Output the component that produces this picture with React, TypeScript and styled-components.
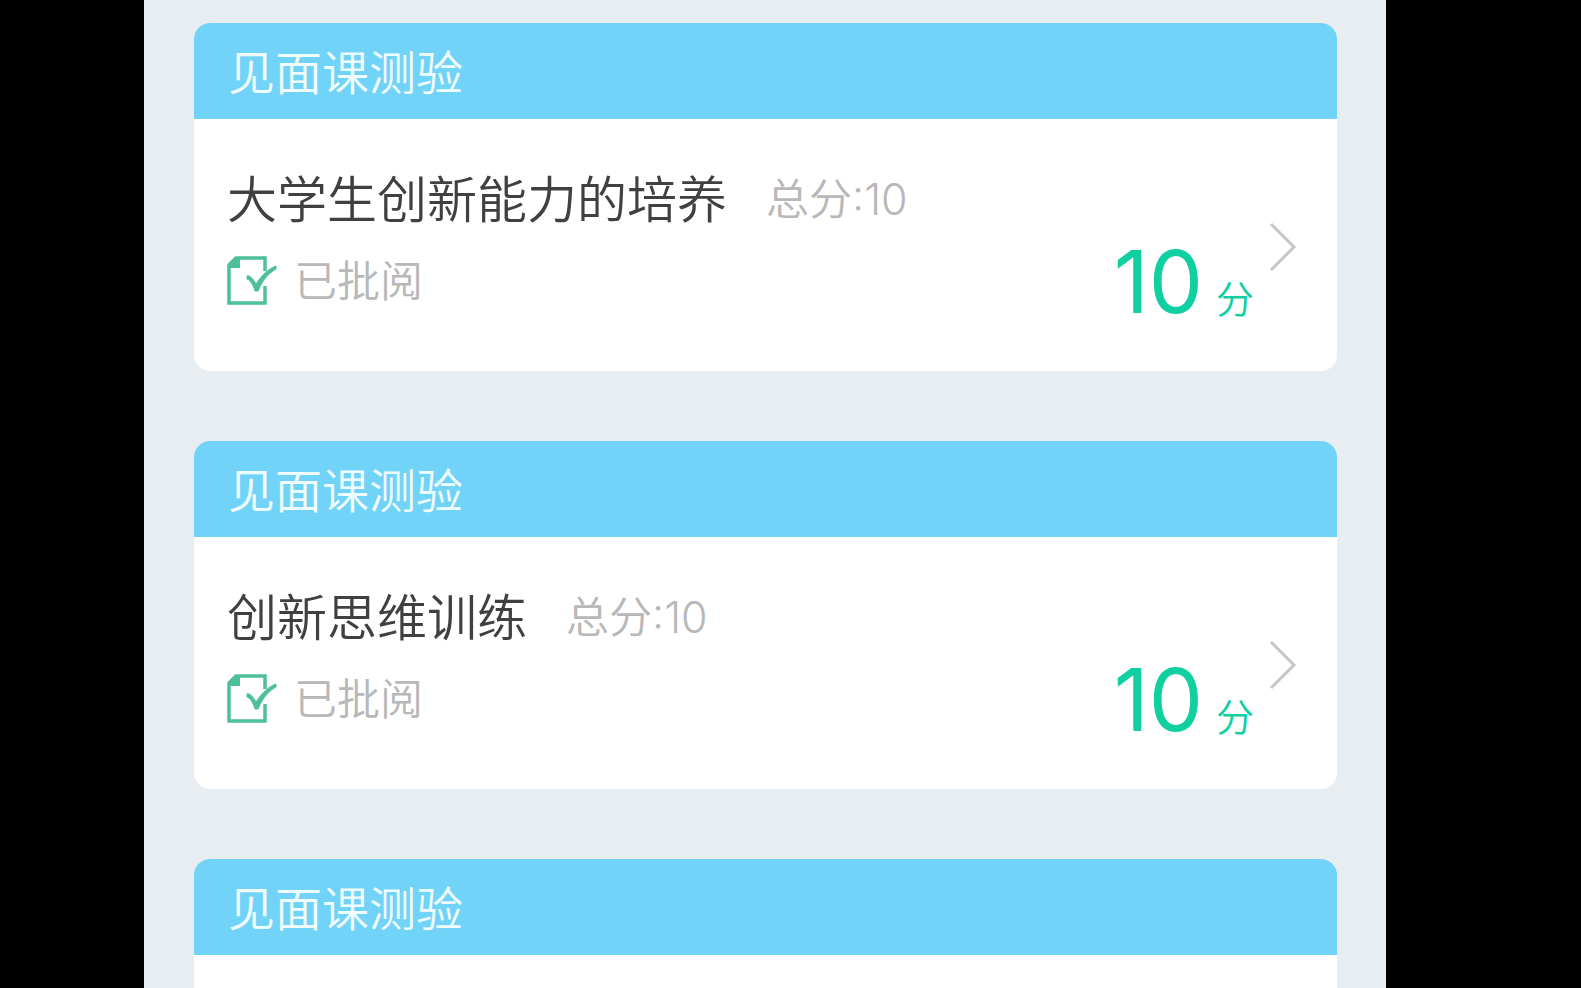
import React from "react";
import styled, { createGlobalStyle } from "styled-components";

const GlobalStyle = createGlobalStyle`
  *, *::before, *::after { box-sizing: border-box; }
  body {
    margin: 0;
    background: #000;
    font-family: Inter, "Noto Sans CJK SC", sans-serif;
  }
`;

const Stage = styled.div`
  height: 100vh;
  padding: 0 195px 0 144px;
  overflow: hidden;
  background: #000;
`;

const Screen = styled.main`
  display: flex;
  flex-direction: column;
  gap: 70px;
  min-height: 100%;
  padding: 23px 49px 70px 50px;
  background: #e8edf2;
`;

const Card = styled.article`
  flex: none;
  overflow: hidden;
  border-radius: 16px;
  background: #fff;
`;

const CardHeader = styled.h2`
  margin: 0;
  padding: 4px 34px 0;
  background: #72d3f8;
  color: #f0fdff;
  font-size: 47px;
  font-weight: 350;
  line-height: 92px;
`;

const CardBody = styled.a`
  display: flex;
  align-items: flex-start;
  min-height: 252px;
  padding: 48px 40px 16px 33px;
  color: inherit;
  text-decoration: none;
`;

const Info = styled.div`
  display: flex;
  flex: 1;
  flex-direction: column;
  gap: 18px;
`;

const Row = styled.div<{ $gap: number }>`
  display: flex;
  align-items: center;
  gap: ${(p) => p.$gap}px;
  height: 64px;
  white-space: nowrap;
`;

const Title = styled.h3`
  margin: 0;
  padding-top: 2px;
  color: #404040;
  font-size: 50px;
  font-weight: 350;
  line-height: 64px;
`;

const Muted = styled.span`
  color: #b8b8b8;
  font-size: 43px;
  font-weight: 350;
  line-height: 64px;
`;

const Score = styled.div`
  display: flex;
  align-items: baseline;
  gap: 13px;
  margin-top: 65px;
  color: #10cfa0;
  line-height: 100px;
`;

const ScoreValue = styled.strong`
  font-size: 86px;
  font-weight: 400;
`;

const ScoreUnit = styled.span`
  font-size: 38px;
  font-weight: 350;
`;

const Chevron = styled.svg`
  width: 28px;
  height: 50px;
  margin: 55px 0 0 15px;
`;

const ReviewedMark = styled.svg`
  width: 50px;
  height: 50px;
`;

function ReviewedIcon() {
  return (
    <ReviewedMark viewBox="0 0 50 50" fill="none" aria-hidden="true">
      <path
        d="M38 15V2H9L2 9V47H38V30"
        stroke="#4dbf9b"
        strokeWidth="3.5"
      />
      <path d="M1 12L11 1H13V12Z" fill="#4dbf9b" />
      <path
        d="M20 20C23 19 26 23 29 28C35 19 41 13 49 10L49 13C42 17 36 23 31 35L28 35C26 28 23 24 20 23Z"
        fill="#4dbf9b"
        stroke="#4dbf9b"
      />
    </ReviewedMark>
  );
}

interface Quiz {
  id: number;
  title?: string;
  total?: number;
  score?: number;
}

const quizzes: Quiz[] = [
  { id: 1, title: "大学生创新能力的培养", total: 10, score: 10 },
  { id: 2, title: "创新思维训练", total: 10, score: 10 },
  { id: 3 },
];

function QuizCard({ id, title, total, score }: Quiz) {
  return (
    <Card>
      <CardHeader>见面课测验</CardHeader>
      <CardBody href={`#quiz-${id}`}>
        {title && (
          <>
            <Info>
              <Row $gap={39}>
                <Title>{title}</Title>
                <Muted>总分:{total}</Muted>
              </Row>
              <Row $gap={17}>
                <ReviewedIcon />
                <Muted>已批阅</Muted>
              </Row>
            </Info>
            <Score>
              <ScoreValue>{score}</ScoreValue>
              <ScoreUnit>分</ScoreUnit>
            </Score>
            <Chevron viewBox="0 0 28 50" fill="none" aria-hidden="true">
              <path d="M2 2L25 25L2 48" stroke="#c6c6c6" strokeWidth="3" />
            </Chevron>
          </>
        )}
      </CardBody>
    </Card>
  );
}

export default function App() {
  return (
    <>
      <GlobalStyle />
      <Stage>
        <Screen>
          {quizzes.map((quiz) => (
            <QuizCard key={quiz.id} {...quiz} />
          ))}
        </Screen>
      </Stage>
    </>
  );
}
